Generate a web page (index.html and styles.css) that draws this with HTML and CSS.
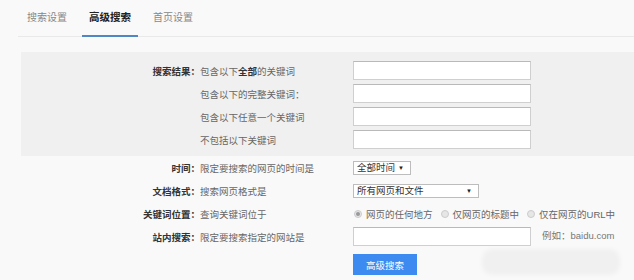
FILE: index.html
```html
<!DOCTYPE html>
<html lang="zh-CN">
<head>
  <meta charset="UTF-8" />
  <title>高级搜索</title>
  <link rel="stylesheet" href="styles.css">
</head>
<body>
  <!-- Tabs across the top -->
  <div class="tabs">
    <div class="tab">搜索设置</div>
    <div class="tab active">高级搜索</div>
    <div class="tab">首页设置</div>
  </div>

  <!-- Keyword block on grey background -->
  <div class="panel">
    <div class="row">
      <div class="label">搜索结果：</div>
      <div class="desc">包含以下<b>全部</b>的关键词</div>
      <div class="ctrl"><input class="field" type="text"></div>
    </div>
    <div class="row">
      <div class="label"></div>
      <div class="desc">包含以下的完整关键词：</div>
      <div class="ctrl"><input class="field" type="text"></div>
    </div>
    <div class="row">
      <div class="label"></div>
      <div class="desc">包含以下任意一个关键词</div>
      <div class="ctrl"><input class="field" type="text"></div>
    </div>
    <div class="row">
      <div class="label"></div>
      <div class="desc">不包括以下关键词</div>
      <div class="ctrl"><input class="field" type="text"></div>
    </div>
  </div>

  <div class="options">
    <div class="row">
      <div class="label">时间：</div>
      <div class="desc">限定要搜索的网页的时间是</div>
      <div class="ctrl">
        <div class="select short">全部时间<span class="arrow">▼</span></div>
      </div>
    </div>
    <div class="row">
      <div class="label">文档格式：</div>
      <div class="desc">搜索网页格式是</div>
      <div class="ctrl">
        <div class="select long">所有网页和文件<span class="arrow">▼</span></div>
      </div>
    </div>
    <div class="row">
      <div class="label">关键词位置：</div>
      <div class="desc">查询关键词位于</div>
      <div class="ctrl radios">
        <span class="radio checked"></span><span>网页的任何地方</span>
        <span class="radio"></span><span>仅网页的标题中</span>
        <span class="radio"></span><span>仅在网页的URL中</span>
      </div>
    </div>
    <div class="row">
      <div class="label">站内搜索：</div>
      <div class="desc">限定要搜索指定的网站是</div>
      <div class="ctrl">
        <input class="field" type="text">
        <span class="hint">例如：baidu.com</span>
      </div>
    </div>
    <div class="row submit">
      <div class="label"></div>
      <div class="desc"></div>
      <div class="ctrl"><button class="btn">高级搜索</button></div>
    </div>
  </div>

  <!-- faint smudge sitting over the bottom right -->
  <div class="smudge"></div>
</body>
</html>
```

FILE: styles.css
```css
/* page */
body {
  margin: 0;
  background-color: #f9f9f9;
  font-family: "Liberation Sans", "Noto Sans CJK SC", sans-serif;
  font-size: 9.5px;
  color: #666;
  position: relative;
  height: 280px;
  overflow: hidden;
}

/* tabs */
.tabs {
  display: flex;
  gap: 8px;
  margin-left: 18px;
  padding-left: 2px;
  border-bottom: 1px solid #e9e9e9;
  height: 36px;
}
.tab {
  padding: 0 7px;
  line-height: 35px;
  height: 35px;
  font-size: 10px;
  color: #888;
  border-bottom: 2px solid transparent;
}
.tab.active {
  color: #222;
  font-weight: bold;
  font-size: 10.5px;
  border-bottom-color: #4f86c6;
}

/* grey keyword panel */
.panel {
  margin: 15px 0 0 21px;
  padding: 7px 0 5px;
  background-color: #f0f0f0;
}
.options {
  margin-left: 21px;
}

/* one form row: label | description | control */
.row {
  display: grid;
  grid-template-columns: 179px 153px 1fr;
  align-items: center;
  height: 23px;
}
.label {
  text-align: right;
  font-weight: bold;
  color: #333;
}
.desc b {
  color: #333;
}
.ctrl {
  display: flex;
  align-items: center;
}

/* text fields */
.field {
  box-sizing: border-box;
  width: 178px;
  height: 19px;
  margin: 0;
  border: 1px solid #cfcfcf;
  border-top-color: #b9b9b9;
  background: #fff;
  padding: 0 4px;
}

/* fake selects */
.select {
  box-sizing: border-box;
  height: 14px;
  line-height: 12px;
  border: 1px solid #bdbdbd;
  background: #fff;
  color: #333;
  padding: 0 3px;
  display: flex;
  justify-content: space-between;
}
.select.short { width: 58px; }
.select.long { width: 126px; }
.arrow {
  font-size: 6px;
  color: #222;
  padding-right: 3px;
}

/* radio group */
.radios {
  gap: 0;
  margin-left: 1px;
}
.radio {
  box-sizing: border-box;
  width: 8px;
  height: 8px;
  border-radius: 50%;
  border: 1px solid #ccc;
  background: #e6e6e6;
  margin: 0 4px 0 0;
  display: inline-flex;
  align-items: center;
  justify-content: center;
}
.radios span + .radio {
  margin-left: 8px;
}
.radio.checked::after {
  content: '';
  width: 4px;
  height: 4px;
  border-radius: 50%;
  background: #999;
}

.hint {
  margin-left: 11px;
  margin-top: -4px;
  color: #777;
}

/* submit */
.row.submit {
  height: 21px;
  margin-top: 6px;
}
.btn {
  width: 64px;
  height: 21px;
  border: none;
  background-color: #3d8af0;
  color: #fff;
  font-family: inherit;
  font-size: 9.5px;
  padding: 0;
}

.smudge {
  position: absolute;
  left: 482px;
  top: 249px;
  width: 138px;
  height: 26px;
  border-radius: 10px;
  background: rgba(0, 0, 0, 0.035);
  filter: blur(2px);
}
```
